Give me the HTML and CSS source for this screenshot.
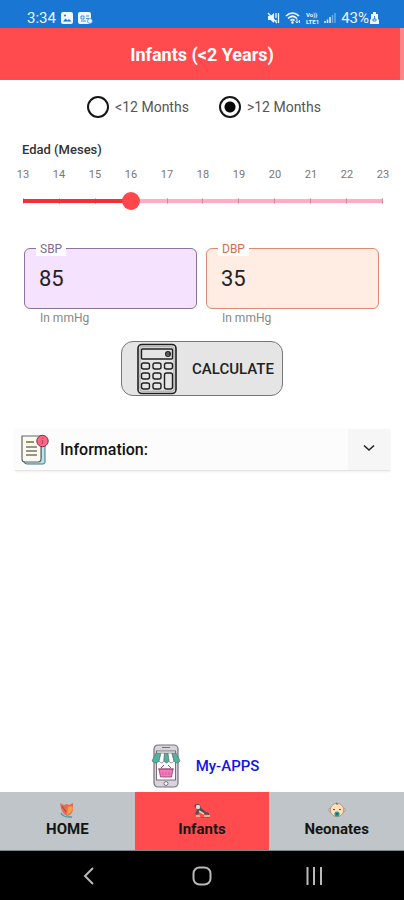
FILE: index.html
```html
<!DOCTYPE html>
<html lang="en">
<head>
<meta charset="utf-8">
<meta name="viewport" content="width=device-width, initial-scale=1">
<title>Infants (&lt;2 Years)</title>
<link rel="stylesheet" href="styles.css">
</head>
<body>
<div class="status">
  <span class="time">3:34</span>
  <svg width="12" height="12" viewBox="0 0 12 12"><rect width="12" height="12" rx="2" fill="#eef6ff"/><path d="M2 9.500l2.500-3 2 2 1.500-1.500 2.500 2.500z" fill="#1976d2"/><circle cx="4" cy="3.500" r="1" fill="#1976d2"/></svg>
  <svg width="15" height="12" viewBox="0 0 15 12"><rect width="13" height="12" rx="2" fill="#eef6ff"/><path d="M3 4h3v3H3zM8 4h3M8 6.500h3M3 9h5" stroke="#1976d2" stroke-width=".8" fill="none"/><circle cx="12" cy="9" r="2.500" fill="#eef6ff" stroke="#1976d2" stroke-width=".6"/></svg>
  <span class="spacer"></span>
  <svg width="13" height="12" viewBox="0 0 13 12"><path d="M1 4h2.500L7 1v10L3.500 8H1z" fill="#eef6ff"/><path d="M1 1l9 10M9 1v5M11.500 1v10M9 8v1" stroke="#eef6ff" stroke-width="1.300"/></svg>
  <svg width="16" height="12" viewBox="0 0 16 12"><path d="M1 4C5 0 10 0 14 4M3 6.500c3-3 6-3 9 0M5.500 8.700c1.500-1.500 2.500-1.500 4 0" fill="none" stroke="#eef6ff" stroke-width="1.700"/><circle cx="7.500" cy="10.500" r="1.200" fill="#eef6ff"/><path d="M12 7v4M10.500 9.500L12 11l1.500-1.500M14.500 11V8" fill="none" stroke="#eef6ff"/></svg>
  <span class="volte">Vo))<br>LTE1</span>
  <svg width="12" height="12" viewBox="0 0 12 12"><path d="M1 11V9M3.500 11V7.500M6 11V5" stroke="#eef6ff" stroke-width="1.500"/><path d="M8.500 11V3M11 11V1" stroke="#76b0eb" stroke-width="1.300"/></svg>
  <span class="time">43%</span>
  <svg class="battery" width="9" height="12" viewBox="0 0 9 12"><path d="M3 0h3v2h2v5l1 1v4H0V8l1-1V2h2z" fill="#eef6ff"/><path d="M4.500 4v3M3 7h3v2H3z" stroke="#1976d2" stroke-width=".8" fill="none"/></svg>
</div>
<header class="header"><h1>Infants (&lt;2 Years)</h1></header>
<main>
  <form class="form">
    <div class="radios">
      <label><input type="radio" name="age"><span>&lt;12 Months</span></label>
      <label><input type="radio" name="age" checked><span>&gt;12 Months</span></label>
    </div>
    <label class="slider-title" for="months">Edad (Meses)</label>
    <div class="scale"><span>13</span><span>14</span><span>15</span><span>16</span><span>17</span><span>18</span><span>19</span><span>20</span><span>21</span><span>22</span><span>23</span></div>
    <div class="slider">
      <div class="track"><div class="fill" style="width:30%"></div></div>
      <div class="ticks"><i></i><i></i><i></i><i></i><i></i><i></i><i></i><i></i><i></i><i></i><i></i></div>
      <input id="months" type="range" min="13" max="23" value="16">
    </div>
    <div class="fields">
      <div class="field sbp"><label for="sbp">SBP</label><input id="sbp" type="text" inputmode="numeric" value="85"><small>In mmHg</small></div>
      <div class="field dbp"><label for="dbp">DBP</label><input id="dbp" type="text" inputmode="numeric" value="35"><small>In mmHg</small></div>
    </div>
    <button class="calculate" type="button">
      <svg width="42" height="52" viewBox="0 0 42 52" fill="none" stroke="#202020" stroke-width="1.400"><rect x="2" y="1.500" width="38" height="49" rx="4" stroke-width="1.600"/><rect x="4" y="3.800" width="34" height="44.400" rx="2" stroke="#888" stroke-width=".7"/><rect x="5.500" y="6" width="31" height="10" rx="1"/><circle cx="32" cy="11" r="2.300"/><path d="M30.500 11H34"/><rect x="5.500" y="20" width="8" height="6" rx="2"/><rect x="17" y="20" width="8" height="6" rx="2"/><rect x="28.500" y="20" width="8" height="6" rx="2"/><rect x="5.500" y="30" width="8" height="6" rx="2"/><rect x="17" y="30" width="8" height="6" rx="2"/><rect x="28.500" y="30" width="8" height="16" rx="2"/><rect x="5.500" y="40" width="8" height="6" rx="2"/><rect x="17" y="40" width="8" height="6" rx="2"/></svg>
      <span>CALCULATE</span>
    </button>
  </form>
  <section class="info">
    <svg width="30" height="32" viewBox="0 0 30 32"><path d="M6 24h15V8h4v20q0 2-2 2H7q-3 0-3-3" fill="#b9e4e7" stroke="#477580"/><path d="M2 2h19v23q0 3-3 3H5q-3 0-3-3z" fill="#faf9f2" stroke="#666" stroke-width="1.200"/><path d="M6 8h8" stroke="#9b925f" stroke-width="2"/><path d="M6 13h11M6 17h11M6 21h11" stroke="#777565" stroke-width="1.300"/><circle cx="22.500" cy="7" r="5.700" fill="#ff6582" stroke="#6d3545"/><path d="M22.500 6v4M22.500 3.500v1" stroke="#c74060" stroke-width="1.200"/></svg>
    <h2>Information:</h2>
    <button type="button" aria-label="Expand information"><svg width="12" height="8" viewBox="0 0 12 8"><path d="M1 1.500l5 4.500 5-4.500" fill="none" stroke="#222" stroke-width="1.600"/></svg></button>
  </section>
  <a class="apps" href="#">
    <svg width="30" height="44" viewBox="0 0 30 44"><rect x="3" y="1" width="24" height="42" rx="4" fill="#d9d4dc" stroke="#77707d" stroke-width="1.200"/><rect x="5.500" y="7" width="19" height="29" fill="#fff" stroke="#77707d"/><path d="M11 3.500h8" stroke="#77707d"/><circle cx="15" cy="39.500" r="2" fill="#fff" stroke="#77707d"/><g stroke="#65716f" stroke-width=".7"><path d="M5 9h5l-2 8q-3 4-7 0z" fill="#48b6a0"/><path d="M10 9h3.500L13 17q-2 4-5 0z" fill="#fff"/><path d="M13.500 9h3.500l1 8q-2.500 4-5 0z" fill="#48b6a0"/><path d="M17 9h4l2 8q-3 4-5 0z" fill="#fff"/><path d="M21 9h4l4 8q-3 4-6 0z" fill="#48b6a0"/></g><path d="M8 25h14l-1.500 8h-11z" fill="#f27ab8" stroke="#8b3d6d" stroke-width=".8"/><path d="M7 25h16M10 24l3-3M20 24l-3-3" stroke="#a1467e"/><path d="M12 28v3M15 28v3M18 28v3" stroke="#c75694" stroke-width=".7"/></svg>
    <span>My-APPS</span>
  </a>
</main>
<nav class="tabs">
  <a href="#"><svg width="18" height="17" viewBox="0 0 18 17"><path d="M2 1l4 2 3-1 2 1 4-2v7q-1 5-6 6-5-3-6-8z" fill="#e96b51"/><path d="M10 5q4-2 5 1-1 5-6 7z" fill="#f1a243"/><path d="M4 4l4 6" stroke="#a83e3d"/><path d="M3 11q2 4 8 4h3" fill="none" stroke="#489ca5" stroke-width="1.400"/></svg><span>HOME</span></a>
  <a class="active" href="#" aria-current="page"><svg width="18" height="17" viewBox="0 0 18 17"><path d="M1 4q3-4 6-1l1 3 5 4 3 1v2l-5-1-4-3-3 4-2-1 2-4z" fill="#43535c"/><circle cx="5" cy="5" r="2.200" fill="#efd2bd"/><path d="M6 9l5 3M3 14h4M11 14h6" stroke="#e6cfad" stroke-width="1.500"/><path d="M8 15.500h9" stroke="#5e734c"/></svg><span>Infants</span></a>
  <a href="#"><svg width="18" height="17" viewBox="0 0 18 17"><circle cx="2.500" cy="8" r="1.800" fill="#f5cda6" stroke="#a38169" stroke-width=".6"/><circle cx="15.500" cy="8" r="1.800" fill="#f5cda6" stroke="#a38169" stroke-width=".6"/><circle cx="9" cy="8" r="6.700" fill="#ffdfb9" stroke="#a38169" stroke-width=".7"/><path d="M8 1q2 0 1 2" fill="none" stroke="#805d48"/><path d="M5 7.500h2M11 7.500h2" stroke="#61504b"/><circle cx="9" cy="12" r="2.600" fill="#2b9693"/><circle cx="9" cy="12" r="1" fill="#176764"/></svg><span>Neonates</span></a>
</nav>
<div class="system">
  <button type="button" aria-label="Back"><svg width="22" height="22" viewBox="0 0 22 22"><path d="M15 3L7 11l8 8"/></svg></button>
  <button type="button" aria-label="Home"><svg width="22" height="22" viewBox="0 0 22 22"><rect x="2.500" y="2.500" width="17" height="17" rx="6"/></svg></button>
  <button type="button" aria-label="Recent apps"><svg width="22" height="22" viewBox="0 0 22 22"><path d="M3.500 2v18M10 2v18M17 2v18"/></svg></button>
</div>
</body>
</html>
```
FILE: styles.css
```css
* { box-sizing: border-box; }
body {
  margin: 0;
  min-height: 100vh;
  display: flex;
  flex-direction: column;
  background: #fff;
  color: #222;
  font-family: Roboto, sans-serif;
}
svg { display: block; flex: none; }
a { color: inherit; text-decoration: none; }
button, input { font: inherit; margin: 0; }
h1, h2 { margin: 0; }

.status {
  height: 28px;
  padding: 7px 25px 0 27px;
  display: flex;
  align-items: center;
  gap: 5px;
  background: #1976d2;
  color: #eef6ff;
}
.time { font-size: 15px; line-height: 20px; }
.spacer { flex: 1; }
.volte { font-size: 6px; line-height: 7px; font-weight: 700; }
.battery { margin-left: -4px; }

.header {
  height: 52px;
  padding-top: 2px;
  display: grid;
  place-items: center;
  background: #ff4b4e;
  box-shadow: inset -4px 0 #ff8588;
  color: #fff;
}
.header h1 { font-size: 18px; line-height: 24px; font-weight: 700; }

main { flex: 1; display: flex; flex-direction: column; }
.form { display: flex; flex-direction: column; }
.radios {
  display: flex;
  justify-content: center;
  gap: 30px;
  padding: 16px 0 0 4px;
}
.radios label {
  display: flex;
  align-items: center;
  gap: 6px;
  font-size: 14px;
  line-height: 22px;
  color: #555;
}
.radios input {
  appearance: none;
  width: 22px;
  height: 22px;
  border: 2px solid #161616;
  border-radius: 50%;
  background: #fff;
}
.radios input:checked { background: radial-gradient(circle, #080808 5px, #fff 6px); }

.slider-title {
  margin: 24px 22px 0;
  font-size: 13px;
  line-height: 16px;
  font-weight: 500;
  color: #333;
}
.scale {
  display: grid;
  grid-template-columns: repeat(11, 1fr);
  margin: 9px 3px 0 5px;
  font-size: 11px;
  line-height: 16px;
  color: #777;
  text-align: center;
}
.slider { position: relative; height: 20px; margin: 8px 21px 0 23px; }
.track { position: absolute; inset: 8px 0; background: #ffadc5; }
.fill { height: 100%; background: #f82f32; }
.ticks {
  position: absolute;
  inset: 7px 0;
  display: flex;
  justify-content: space-between;
}
.ticks i { width: 1px; background: #9d4a5a66; }
.slider input {
  position: absolute;
  left: -9px;
  width: calc(100% + 18px);
  height: 20px;
  appearance: none;
  background: transparent;
}
.slider input::-webkit-slider-thumb {
  appearance: none;
  width: 18px;
  height: 18px;
  border-radius: 50%;
  background: #ff474b;
}

.fields {
  display: grid;
  grid-template-columns: 1fr 1fr;
  gap: 9px;
  margin: 37px 25px 0 24px;
}
.field { position: relative; }
.field label {
  position: absolute;
  top: -6px;
  left: 12px;
  padding: 0 4px;
  background: #fff;
  font-size: 12px;
  line-height: 14px;
}
.field input {
  display: block;
  width: 100%;
  height: 61px;
  padding: 0 14px;
  border: 1px solid;
  border-radius: 6px;
  font-size: 22px;
  color: #222;
}
.field small {
  display: block;
  padding: 1px 16px 0;
  font-size: 12px;
  line-height: 16px;
  color: #888;
}
.sbp label { color: #7c6c96; }
.sbp input { background: #f4e2ff; border-color: #89749f; }
.dbp label { color: #d66c50; }
.dbp input { background: #ffece2; border-color: #dc8b70; }

.calculate {
  align-self: center;
  height: 55px;
  margin-top: 15px;
  padding: 0 8px 0 14px;
  display: flex;
  align-items: center;
  gap: 14px;
  border: 1px solid #777;
  border-radius: 12px;
  background: #e5e5e5;
  font-size: 15px;
  font-weight: 500;
  color: #222;
}

.info {
  display: flex;
  align-items: center;
  height: 42px;
  margin: 33px 14px 0 15px;
  padding-left: 5px;
  gap: 10px;
  background: #fcfcfc;
  border-bottom: 1px solid #e4e4e4;
  box-shadow: 0 1px 2px #0001;
}
.info h2 { flex: 1; font-size: 16px; line-height: 22px; font-weight: 500; color: #111; }
.info button {
  align-self: stretch;
  width: 42px;
  padding: 0 0 4px;
  display: grid;
  place-items: center;
  border: 0;
  background: #f6f6f6;
}

.apps {
  align-self: center;
  margin-top: auto;
  padding: 20px 0 4px 6px;
  display: flex;
  align-items: center;
  gap: 15px;
  font-size: 15px;
  font-weight: 500;
  color: #1515df;
}

.tabs {
  display: grid;
  grid-template-columns: repeat(3, 1fr);
  height: 59px;
  background: #bfc5c9;
  border-bottom: 1px solid #818587;
}
.tabs a {
  display: flex;
  flex-direction: column;
  align-items: center;
  padding-top: 10px;
  font-size: 15px;
  line-height: 20px;
  font-weight: 700;
  color: #151515;
}
.tabs .active { background: #ff4b4e; }

.system {
  height: 49px;
  padding: 0 32px;
  display: grid;
  grid-template-columns: repeat(3, 1fr);
  background: #000;
}
.system button {
  display: grid;
  place-items: center;
  padding: 0;
  border: 0;
  background: transparent;
}
.system svg { fill: none; stroke: #b9b9b9; stroke-width: 2; }
```
